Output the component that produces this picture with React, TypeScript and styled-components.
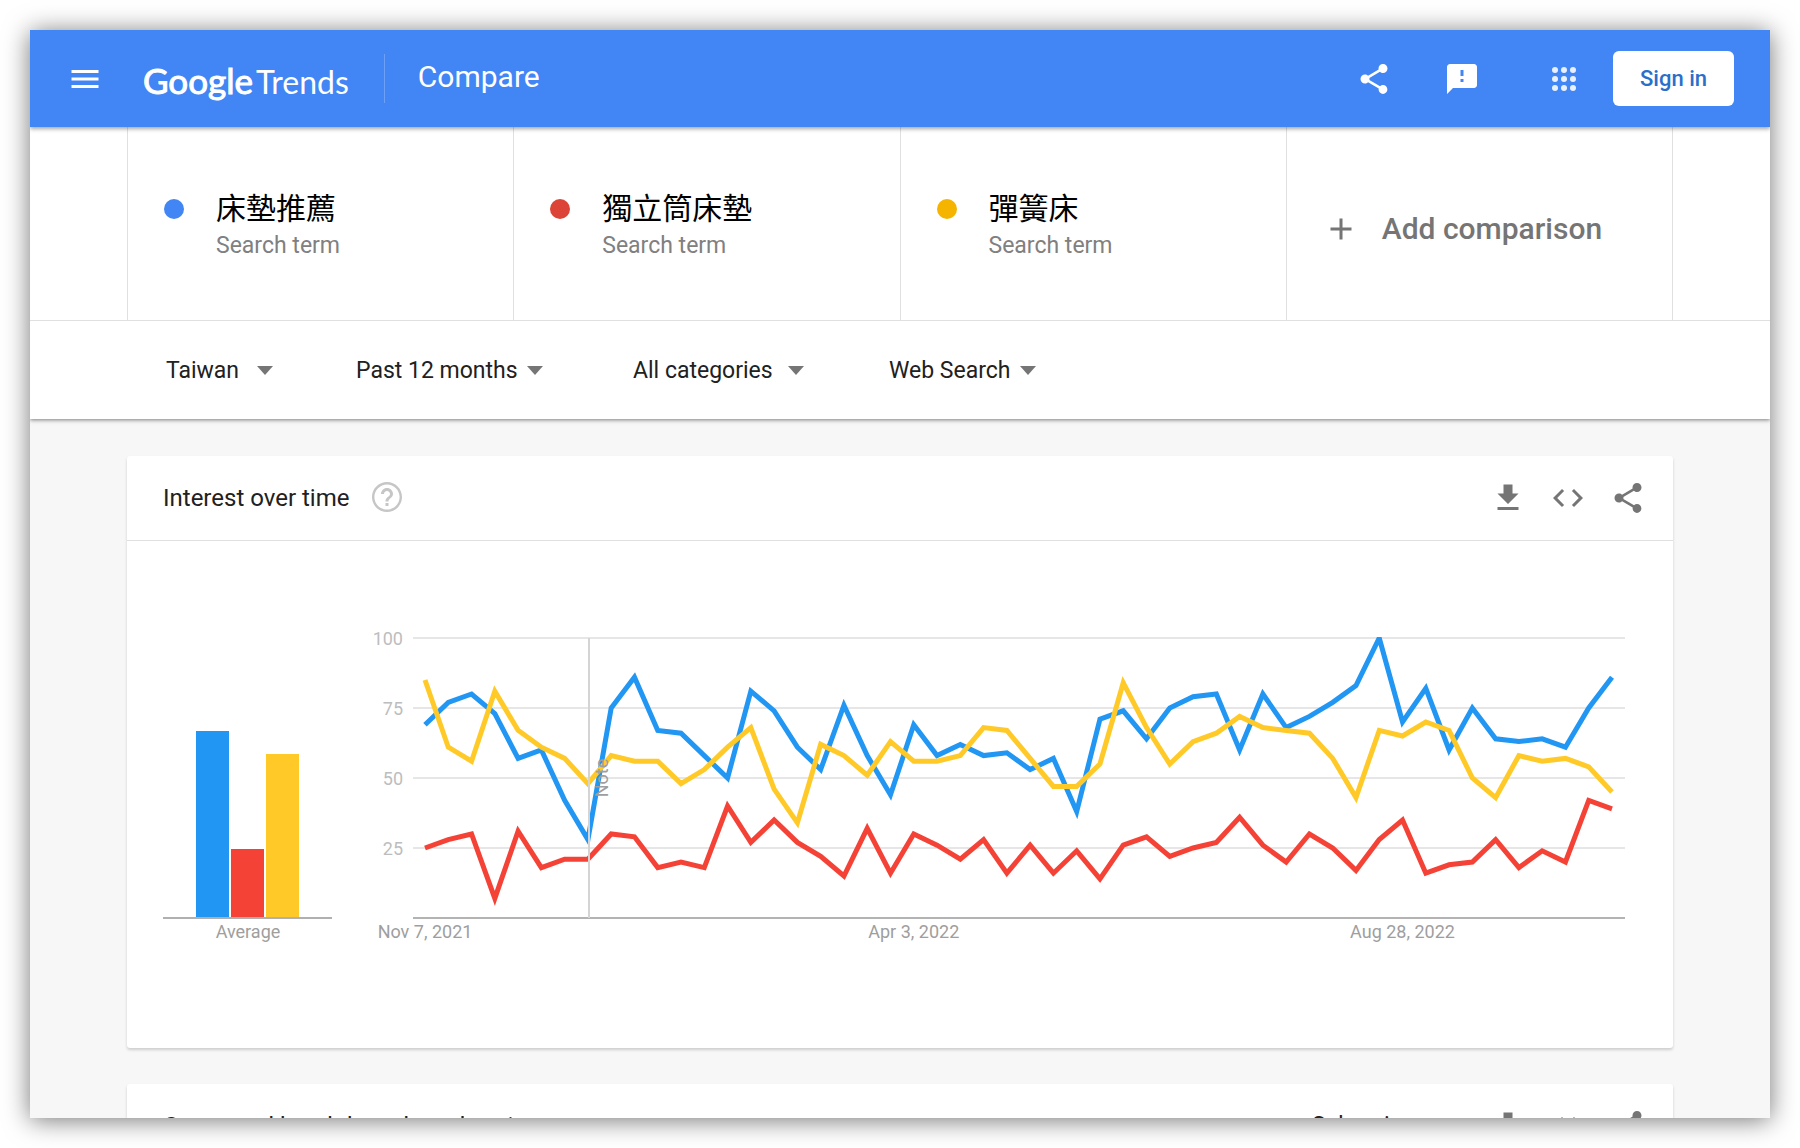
import React from "react";
import styled, { createGlobalStyle } from "styled-components";

const GlobalStyle = createGlobalStyle`
  *, *::before, *::after { box-sizing: border-box; }
  body {
    margin: 0;
    background: #fff;
    font-family: Roboto, "Noto Sans CJK TC", sans-serif;
    color: #212121;
  }
  button, select { font: inherit; color: inherit; }
`;

const Page = styled.div`
  height: 100vh;
  padding: 30px;
`;

const AppWindow = styled.div`
  height: 100%;
  overflow: hidden;
  background: #f7f7f7;
  box-shadow: 0 2px 24px rgba(0, 0, 0, 0.55);
`;

const TopBar = styled.header`
  position: relative;
  display: flex;
  align-items: center;
  height: 97px;
  padding: 0 36px 0 37px;
  background: #4285f4;
  color: #fff;
  box-shadow: 0 2px 4px rgba(0, 0, 0, 0.35);
`;

const IconButton = styled.button`
  display: inline-flex;
  flex: none;
  padding: 0;
  border: 0;
  background: none;
  color: inherit;
  cursor: pointer;
`;

const Icon = styled.svg`
  display: block;
  width: 36px;
  height: 36px;
  fill: currentColor;
`;

const Logo = styled.a`
  display: flex;
  align-items: baseline;
  gap: 3px;
  margin-left: 40px;
  padding-top: 4px;
  font-family: Lato, sans-serif;
  line-height: 40px;
  color: #fff;
  text-decoration: none;
`;

const LogoName = styled.span`
  font-size: 35px;
  -webkit-text-stroke: 1px #fff;
`;

const LogoProduct = styled.span`
  font-size: 32px;
`;

const Divider = styled.span`
  width: 1px;
  height: 49px;
  margin: 0 33px 0 35px;
  background: #6da1f7;
`;

const PageTitle = styled.h1`
  flex: 1;
  margin: 0;
  padding-bottom: 4px;
  font-size: 30px;
  font-weight: 400;
  line-height: 36px;
`;

const ShareGroup = styled.div`
  display: flex;
  gap: 52px;
`;

const AccountGroup = styled.div`
  display: flex;
  align-items: center;
  gap: 31px;
  margin-left: 66px;
`;

const SignIn = styled.button`
  width: 121px;
  height: 55px;
  padding: 0;
  border: 0;
  border-radius: 6px;
  background: #fff;
  color: #2a6fca;
  font-size: 22px;
  font-weight: 500;
  cursor: pointer;
`;

const Query = styled.section`
  background: #fff;
  box-shadow: 0 1px 4px rgba(0, 0, 0, 0.5);
`;

const Terms = styled.div`
  border-bottom: 1px solid #e0e0e0;
`;

const TermGrid = styled.div`
  display: grid;
  grid-template-columns: repeat(4, 1fr);
  height: 193px;
  margin: 0 97px;
  border-right: 1px solid #e0e0e0;
`;

const TermCell = styled.div`
  display: flex;
  gap: 32px;
  padding: 64px 0 0 36px;
  border-left: 1px solid #e0e0e0;
`;

const Dot = styled.span<{ $color: string }>`
  flex: none;
  width: 20px;
  height: 20px;
  margin-top: 8px;
  border-radius: 50%;
  background: ${(p) => p.$color};
`;

const TermName = styled.div`
  font-size: 30px;
  line-height: 36px;
  color: #000;
`;

const TermKind = styled.div`
  margin-top: 5px;
  font-size: 23px;
  line-height: 28px;
  color: #808080;
`;

const AddCell = styled.button`
  display: flex;
  align-items: center;
  gap: 23px;
  padding: 10px 0 0 36px;
  border: 0;
  border-left: 1px solid #e0e0e0;
  background: none;
  color: #757575;
  font-size: 30px;
  font-weight: 500;
  cursor: pointer;
`;

const Filters = styled.form`
  display: grid;
  grid-template-columns: 190px 277px 256px 1fr;
  align-items: center;
  height: 98px;
  padding-left: 136px;
`;

const SelectBox = styled.label<{ $width: number }>`
  display: grid;
  align-items: center;
  width: ${(p) => p.$width}px;

  > * { grid-area: 1 / 1; }
`;

const Select = styled.select`
  width: 100%;
  height: 36px;
  padding: 2px 0 0;
  border: 0;
  background: none;
  appearance: none;
  font-size: 23px;
  line-height: 34px;
  cursor: pointer;
`;

const Arrow = styled.span`
  justify-self: end;
  border: 8px solid transparent;
  border-top: 9px solid #757575;
  border-bottom: 0;
  pointer-events: none;
`;

const Content = styled.main`
  display: grid;
  gap: 36px;
  padding: 37px 97px;
`;

const Card = styled.section`
  background: #fff;
  border-radius: 3px;
  box-shadow: 0 2px 3px rgba(0, 0, 0, 0.17);
`;

const CardHeader = styled.header`
  display: flex;
  align-items: center;
  height: 85px;
  padding: 0 27px 0 36px;
  border-bottom: 1px solid #e0e0e0;
`;

const CardTitle = styled.h2`
  margin: 0 20px 0 0;
  font-size: 24px;
  font-weight: 400;
  line-height: 32px;
`;

const Help = styled(IconButton)`
  padding-bottom: 2px;
  color: #c6c6c6;
`;

const CardTools = styled.div`
  display: flex;
  align-items: center;
  gap: 24px;
  margin-left: auto;
  color: #757575;
`;

const RegionSelect = styled.div`
  margin-right: 24px;
  padding-bottom: 2px;
  color: #212121;
`;

const CardBody = styled.div`
  display: flex;
  align-items: flex-start;
  gap: 42px;
  min-height: 507px;
  padding: 76px 48px 0 36px;
`;

const AverageChart = styled.svg`
  flex: none;
  width: 169px;
  height: 332px;
`;

const LineChart = styled.svg`
  flex: 1;
  min-width: 0;
`;

const AxisText = styled.text<{ $color: string }>`
  font-size: 18px;
  fill: ${(p) => p.$color};
`;

const ICONS = {
  menu: "M3 18h18v-2H3v2zm0-5h18v-2H3v2zm0-7v2h18V6H3z",
  share:
    "M18 16.08c-.76 0-1.44.3-1.96.77L8.91 12.7c.05-.23.09-.46.09-.7s-.04-.47-.09-.7l7.05-4.11c.54.5 1.25.81 2.04.81 1.66 0 3-1.34 3-3s-1.34-3-3-3-3 1.34-3 3c0 .24.04.47.09.7L8.04 9.81C7.5 9.31 6.79 9 6 9c-1.66 0-3 1.34-3 3s1.34 3 3 3c.79 0 1.5-.31 2.04-.81l7.12 4.16c-.05.21-.08.43-.08.65 0 1.61 1.31 2.92 2.92 2.92s2.92-1.31 2.92-2.92-1.31-2.92-2.92-2.92z",
  feedback:
    "M20 2H4c-1.1 0-1.99.9-1.99 2L2 22l4-4h14c1.1 0 2-.9 2-2V4c0-1.1-.9-2-2-2zm-7 12h-2v-2h2v2zm0-4h-2V6h2v4z",
  add: "M19 13h-6v6h-2v-6H5v-2h6V5h2v6h6v2z",
  help: "M11 18h2v-2h-2v2zm1-16C6.48 2 2 6.48 2 12s4.48 10 10 10 10-4.48 10-10S17.52 2 12 2zm0 18.4c-4.63 0-8.4-3.77-8.4-8.4S7.37 3.6 12 3.6s8.4 3.77 8.4 8.4-3.77 8.4-8.4 8.4zM12 6c-2.21 0-4 1.79-4 4h2c0-1.1.9-2 2-2s2 .9 2 2c0 2-3 1.75-3 5h2c0-2.25 3-2.5 3-5 0-2.21-1.79-4-4-4z",
  download: "M19 9h-4V3H9v6H5l7 7 7-7zM5 18v2h14v-2H5z",
  code: "M9.4 16.6L4.8 12l4.6-4.6L8 6l-6 6 6 6 1.4-1.4zm5.2 0l4.6-4.6-4.6-4.6L16 6l6 6-6 6-1.4-1.4z",
};

function Glyph({ name }: { name: keyof typeof ICONS }) {
  return (
    <Icon viewBox="0 0 24 24" aria-hidden="true">
      <path d={ICONS[name]} />
    </Icon>
  );
}

function AppsGlyph() {
  return (
    <Icon viewBox="0 0 24 24" opacity="0.88" aria-hidden="true">
      {[6, 12, 18].map((y) =>
        [6, 12, 18].map((x) => <circle key={`${x}-${y}`} cx={x} cy={y} r="2" />)
      )}
    </Icon>
  );
}

const TERMS = [
  { name: "床墊推薦", color: "#4285f4" },
  { name: "獨立筒床墊", color: "#db4437" },
  { name: "彈簧床", color: "#f4b400" },
];

const FILTERS = [
  { label: "Region", value: "Taiwan", width: 107 },
  { label: "Time range", value: "Past 12 months", width: 187 },
  { label: "Category", value: "All categories", width: 171 },
  { label: "Search type", value: "Web Search", width: 147 },
];

const SERIES = [
  {
    color: "#2196f3",
    average: 67,
    values: [
      69, 77, 80, 73, 57, 60, 42, 28, 75, 86, 67, 66, 58, 50, 81, 74, 61, 53,
      76, 58, 44, 69, 58, 62, 58, 59, 53, 57, 38, 71, 74, 64, 75, 79, 80, 60,
      80, 68, 72, 77, 83, 100, 70, 82, 60, 75, 64, 63, 64, 61, 75, 86,
    ],
  },
  {
    color: "#f44336",
    average: 25,
    values: [
      25, 28, 30, 7, 31, 18, 21, 21, 30, 29, 18, 20, 18, 40, 27, 35, 27, 22,
      15, 32, 16, 30, 26, 21, 28, 16, 26, 16, 24, 14, 26, 29, 22, 25, 27, 36,
      26, 20, 30, 25, 17, 28, 35, 16, 19, 20, 28, 18, 24, 20, 42, 39,
    ],
  },
  {
    color: "#ffca28",
    average: 59,
    values: [
      85, 61, 56, 81, 67, 61, 57, 48, 58, 56, 56, 48, 53, 61, 68, 46, 34, 62,
      58, 51, 63, 56, 56, 58, 68, 67, 57, 47, 47, 55, 84, 68, 55, 63, 66, 72,
      68, 67, 66, 57, 43, 67, 65, 70, 67, 50, 43, 58, 56, 57, 54, 45,
    ],
  },
];

const DATES = [
  { week: 0, text: "Nov 7, 2021" },
  { week: 21, text: "Apr 3, 2022" },
  { week: 42, text: "Aug 28, 2022" },
];

const BASELINE = 301;
const yOf = (value: number) => BASELINE - value * 2.8;
const xOf = (week: number) => 51 + (week * 1187) / 51;
const NOTE_X = Math.round(xOf(7)) + 1;

function Averages() {
  return (
    <AverageChart viewBox="0 0 169 332" role="img" aria-label="Average interest">
      {SERIES.map((s, i) => (
        <rect
          key={s.color}
          x={33 + i * 35}
          y={Math.round(yOf(s.average)) + 1}
          width="33"
          height={BASELINE - Math.round(yOf(s.average)) - 1}
          fill={s.color}
        />
      ))}
      <rect x="0" y="300" width="169" height="2" fill="#b0b0b0" />
      <AxisText $color="#9e9e9e" x="85" y="321" textAnchor="middle">
        Average
      </AxisText>
    </AverageChart>
  );
}

function Timeline() {
  return (
    <LineChart viewBox="0 0 1251 332" role="img" aria-label="Interest over time">
      <clipPath id="plot">
        <rect x="38" y={yOf(100) - 1} width="1213" height="282" />
      </clipPath>
      {[25, 50, 75, 100].map((v) => (
        <React.Fragment key={v}>
          <rect x="39" y={yOf(v) - 1} width="1212" height="2" fill="#e6e6e6" />
          <AxisText $color="#bdbdbd" x="29" y={yOf(v) + 7} textAnchor="end">
            {v}
          </AxisText>
        </React.Fragment>
      ))}
      <rect x="39" y="300" width="1212" height="2" fill="#b3b3b3" />
      <g clipPath="url(#plot)">
        {SERIES.map((s) => (
          <polyline
            key={s.color}
            points={s.values.map((v, i) => `${xOf(i)},${yOf(v)}`).join(" ")}
            fill="none"
            stroke={s.color}
            strokeWidth="5"
            strokeMiterlimit="10"
          />
        ))}
      </g>
      <rect x={NOTE_X - 1} y="21" width="2" height="280" fill="#d4d4d4" />
      <AxisText
        $color="#9e9e9e"
        textAnchor="middle"
        transform={`translate(${NOTE_X + 19} 161) rotate(-90)`}
      >
        Note
      </AxisText>
      {DATES.map((d) => (
        <AxisText
          key={d.week}
          $color="#9e9e9e"
          x={xOf(d.week)}
          y="321"
          textAnchor="middle"
        >
          {d.text}
        </AxisText>
      ))}
    </LineChart>
  );
}

function Dropdown({ label, value, width }: { label: string; value: string; width: number }) {
  return (
    <SelectBox $width={width}>
      <Select aria-label={label}>
        <option>{value}</option>
      </Select>
      <Arrow />
    </SelectBox>
  );
}

function ExportButtons() {
  return (
    <>
      <IconButton type="button" aria-label="Download">
        <Glyph name="download" />
      </IconButton>
      <IconButton type="button" aria-label="Embed">
        <Glyph name="code" />
      </IconButton>
      <IconButton type="button" aria-label="Share">
        <Glyph name="share" />
      </IconButton>
    </>
  );
}

export default function App() {
  return (
    <Page>
      <GlobalStyle />
      <AppWindow>
        <TopBar>
          <IconButton type="button" aria-label="Menu">
            <Glyph name="menu" />
          </IconButton>
          <Logo href="#">
            <LogoName>Google</LogoName>
            <LogoProduct>Trends</LogoProduct>
          </Logo>
          <Divider />
          <PageTitle>Compare</PageTitle>
          <ShareGroup>
            <IconButton type="button" aria-label="Share">
              <Glyph name="share" />
            </IconButton>
            <IconButton type="button" aria-label="Send feedback">
              <Glyph name="feedback" />
            </IconButton>
          </ShareGroup>
          <AccountGroup>
            <IconButton type="button" aria-label="Apps">
              <AppsGlyph />
            </IconButton>
            <SignIn type="button">Sign in</SignIn>
          </AccountGroup>
        </TopBar>

        <Query>
          <Terms>
            <TermGrid>
              {TERMS.map((t) => (
                <TermCell key={t.name}>
                  <Dot $color={t.color} />
                  <div>
                    <TermName lang="zh-Hant">{t.name}</TermName>
                    <TermKind>Search term</TermKind>
                  </div>
                </TermCell>
              ))}
              <AddCell type="button">
                <Glyph name="add" />
                Add comparison
              </AddCell>
            </TermGrid>
          </Terms>
          <Filters>
            {FILTERS.map((f) => (
              <Dropdown key={f.label} {...f} />
            ))}
          </Filters>
        </Query>

        <Content>
          <Card>
            <CardHeader>
              <CardTitle>Interest over time</CardTitle>
              <Help type="button" aria-label="Help">
                <Glyph name="help" />
              </Help>
              <CardTools>
                <ExportButtons />
              </CardTools>
            </CardHeader>
            <CardBody>
              <Averages />
              <Timeline />
            </CardBody>
          </Card>
          <Card>
            <CardHeader>
              <CardTitle>Compared breakdown by subregion</CardTitle>
              <CardTools>
                <RegionSelect>
                  <Dropdown label="Resolution" value="Subregion" width={130} />
                </RegionSelect>
                <ExportButtons />
              </CardTools>
            </CardHeader>
          </Card>
        </Content>
      </AppWindow>
    </Page>
  );
}
